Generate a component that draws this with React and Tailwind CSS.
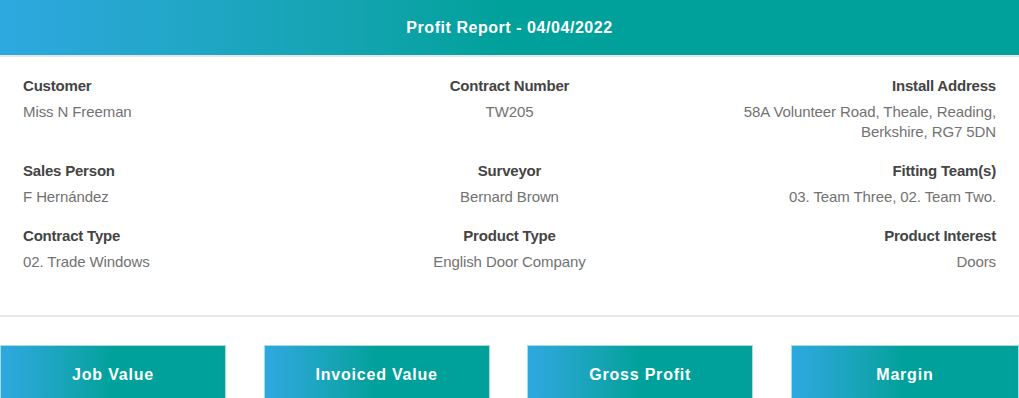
export default function App() {
  const rows = [
    [
      { l: "Customer", v: ["Miss N Freeman"] },
      { l: "Contract Number", v: ["TW205"] },
      { l: "Install Address", v: ["58A Volunteer Road, Theale, Reading,", "Berkshire, RG7 5DN"] },
    ],
    [
      { l: "Sales Person", v: ["F Hernández"] },
      { l: "Surveyor", v: ["Bernard Brown"] },
      { l: "Fitting Team(s)", v: ["03. Team Three, 02. Team Two."] },
    ],
    [
      { l: "Contract Type", v: ["02. Trade Windows"] },
      { l: "Product Type", v: ["English Door Company"] },
      { l: "Product Interest", v: ["Doors"] },
    ],
  ];
  const align = ["text-left", "text-center", "text-right"];
  const buttons = ["Job Value", "Invoiced Value", "Gross Profit", "Margin"];
  return (
    <div className="w-[1019px] h-[398px] overflow-hidden bg-white font-['Liberation_Sans',Arial,sans-serif]">
      <div className="h-[57px] border-b-2 border-[#e2e8ea] bg-linear-to-r from-[#2ea8e0] to-[#00a19a] to-50% flex items-center justify-center">
        <h1 className="text-white font-bold text-[16px] tracking-[0.55px] leading-none">Profit Report - 04/04/2022</h1>
      </div>
      <div className="px-[23px] pt-[19px] pb-[43px] flex flex-col gap-[19px] border-b-2 border-[#e6e9ec]">
        {rows.map((r, i) => (
          <div key={i} className="grid grid-cols-3">
            {r.map((c, j) => (
              <div key={j} className={align[j]}>
                <div className="text-[15px] leading-[20px] font-bold text-[#444] tracking-[-0.2px] mb-[6px]">{c.l}</div>
                {c.v.map((t, k) => (
                  <div key={k} className="text-[15px] leading-[20px] text-[#727272] tracking-[-0.1px]">{t}</div>
                ))}
              </div>
            ))}
          </div>
        ))}
      </div>
      <div className="flex gap-[37.6px] mt-[28px]">
        {buttons.map((b, i) => (
          <div
            key={b}
            className={`${i === 3 ? "flex-1" : "w-[226px] shrink-0"} h-[56px] pt-[4px] border border-[#a9dcdc] bg-linear-to-r from-[#2ea8e0] to-[#00a19a] to-50% flex items-center justify-center text-white font-bold text-[16px] tracking-[0.8px]`}
          >
            {b}
          </div>
        ))}
      </div>
    </div>
  );
}
